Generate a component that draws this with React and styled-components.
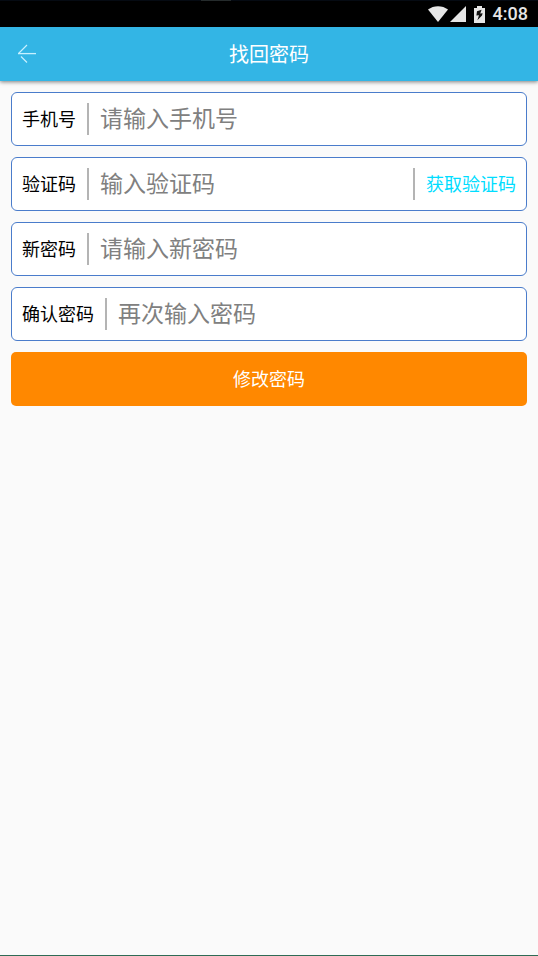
import React, { useState } from "react";
import styled, { createGlobalStyle } from "styled-components";

const GlobalStyle = createGlobalStyle`
  * {
    box-sizing: border-box;
  }

  body {
    margin: 0;
    background: #fafafa;
    font-family: Roboto, "Noto Sans CJK SC", sans-serif;
  }
`;

const fields = [
  { id: "phone", label: "手机号", placeholder: "请输入手机号", type: "tel" },
  { id: "code", label: "验证码", placeholder: "输入验证码", type: "text", action: "获取验证码" },
  { id: "password", label: "新密码", placeholder: "请输入新密码", type: "password" },
  { id: "confirm", label: "确认密码", placeholder: "再次输入密码", type: "password" }
];

const WifiIcon = () => (
  <svg width="20" height="16" viewBox="0 0 20 16" aria-hidden="true">
    <path d="M0 3.6C5.6-1 14.4-1 20 3.6L10 16z" fill="#e6e6e6" />
  </svg>
);

const SignalIcon = () => (
  <svg width="16" height="16" viewBox="0 0 16 16" aria-hidden="true">
    <path d="M16 0v16H0z" fill="#e6e6e6" />
  </svg>
);

const BatteryIcon = () => (
  <svg width="11" height="17" viewBox="0 0 11 17" aria-hidden="true">
    <path d="M3 0h5v2h3v15H0V2h3z" fill="#e6e6e6" />
    <path d="M7.6 3.8L3 5.2 2.4 9.6l2.6-.4-1.6 5L8 9.4l.6-2.2-2.4.4z" fill="#111" />
  </svg>
);

const BackIcon = () => (
  <svg width="20" height="20" viewBox="0 0 20 20" fill="none" stroke="#c8f0ff" aria-hidden="true">
    <path d="M1 9.6h18" strokeWidth="1.3" />
    <path d="M10 1L1.5 9.5M4 12.5l6 6" strokeWidth="1.2" />
  </svg>
);

export default function App() {
  const [values, setValues] = useState({});

  const changeHandler = e => {
    setValues({ ...values, [e.target.name]: e.target.value });
  };

  return (
    <Page>
      <GlobalStyle />
      <StatusBar>
        <Notch />
        <StatusIcons>
          <WifiIcon />
          <SignalIcon />
        </StatusIcons>
        <BatteryIcon />
        <Clock>4:08</Clock>
      </StatusBar>
      <Header>
        <BackButton type="button" aria-label="返回">
          <BackIcon />
        </BackButton>
        <Title>找回密码</Title>
      </Header>
      <Form onSubmit={e => e.preventDefault()}>
        {fields.map(({ id, label, placeholder, type, action }) => (
          <Field key={id}>
            <Label htmlFor={id}>{label}</Label>
            <Divider />
            <Input
              id={id}
              name={id}
              type={type}
              placeholder={placeholder}
              value={values[id] || ""}
              onChange={changeHandler}
            />
            {action && (
              <>
                <Divider />
                <CodeButton type="button">{action}</CodeButton>
              </>
            )}
          </Field>
        ))}
        <SubmitButton type="submit">修改密码</SubmitButton>
      </Form>
    </Page>
  );
}

const Page = styled.div`
  display: flex;
  flex-direction: column;
  min-height: 100vh;
  background: #fafafa;
  border-bottom: 1px solid #2f6b55;
`;

const StatusBar = styled.div`
  position: relative;
  display: flex;
  align-items: center;
  justify-content: flex-end;
  gap: 8px;
  height: 27px;
  padding-right: 10px;
  background: #000;
  border-top: 1px solid #050a12;
`;

const Notch = styled.span`
  position: absolute;
  top: -1px;
  left: 201px;
  width: 30px;
  height: 1px;
  background: #252b2c;
`;

const StatusIcons = styled.div`
  display: flex;
  gap: 2px;
`;

const Clock = styled.span`
  color: #e6e6e6;
  font-size: 18px;
  font-weight: 500;
  line-height: 24px;
`;

const Header = styled.header`
  display: grid;
  grid-template-columns: 54px 1fr 54px;
  align-items: center;
  height: 54px;
  background: #33b5e5;
  box-shadow: 0 1px 4px rgba(0, 0, 0, 0.5);
`;

const BackButton = styled.button`
  display: flex;
  align-items: center;
  justify-content: center;
  height: 54px;
  padding: 0;
  border: 0;
  background: none;
`;

const Title = styled.h1`
  margin: 0;
  color: #fff;
  font-family: "Noto Sans CJK SC", sans-serif;
  font-size: 20px;
  font-weight: 400;
  line-height: 28px;
  text-align: center;
`;

const Form = styled.form`
  display: flex;
  flex-direction: column;
  gap: 11px;
  padding: 11px;
`;

const Field = styled.div`
  display: flex;
  align-items: center;
  gap: 11px;
  height: 54px;
  padding: 0 10px;
  background: #fff;
  border: 1px solid #4a7ccb;
  border-radius: 6px;
`;

const Label = styled.label`
  color: #000;
  font-size: 18px;
  line-height: 27px;
  white-space: nowrap;
`;

const Divider = styled.span`
  flex: none;
  width: 2px;
  height: 32px;
  background: #b4b4b4;
`;

const Input = styled.input`
  flex: 1;
  min-width: 0;
  height: 36px;
  padding: 0;
  border: 0;
  outline: 0;
  background: none;
  color: #000;
  font-family: inherit;
  font-size: 23px;

  &::placeholder {
    color: #808080;
    opacity: 1;
  }
`;

const CodeButton = styled.button`
  padding: 0;
  border: 0;
  background: none;
  color: #00ddff;
  font-family: inherit;
  font-size: 18px;
  line-height: 27px;
  white-space: nowrap;
`;

const SubmitButton = styled.button`
  height: 54px;
  padding: 0;
  border: 0;
  border-radius: 5px;
  background: #ff8800;
  color: #fff;
  font-family: inherit;
  font-size: 18px;
  line-height: 27px;
`;
